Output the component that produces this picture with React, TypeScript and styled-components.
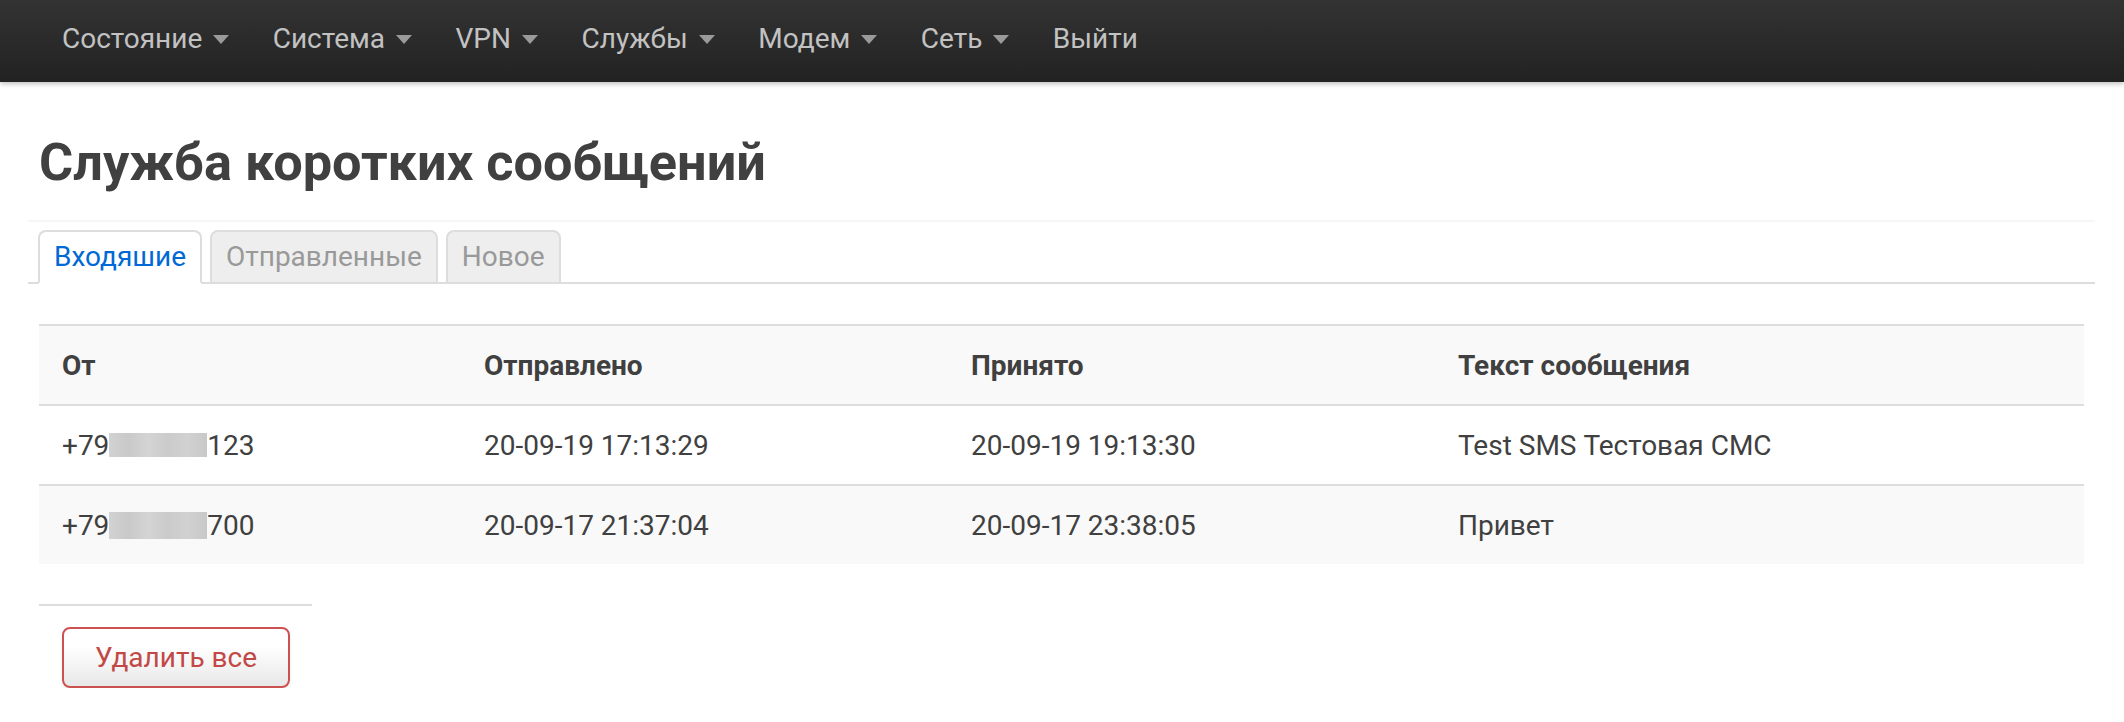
import React from "react";
import styled, { createGlobalStyle } from "styled-components";

const GlobalStyle = createGlobalStyle`
  html, body {
    margin: 0;
    padding: 0;
    background: #ffffff;
  }
  body {
    font-family: Roboto, "Noto Sans", "Liberation Sans", sans-serif;
    font-size: 28px;
    color: #404040;
  }
  * { box-sizing: border-box; }
`;

const Navbar = styled.header`
  height: 82px;
  background: linear-gradient(to bottom, #333333, #222222);
  box-shadow: 0 2px 5px rgba(0, 0, 0, 0.25);
  display: flex;
  align-items: flex-start;
  padding-left: 41px;
`;

const NavItem = styled.a`
  display: flex;
  align-items: center;
  height: 76px;
  padding: 0 22.5px 0 21px;
  color: #c2c2c2;
  font-size: 28px;
  text-decoration: none;
  white-space: nowrap;
`;

const Caret = styled.span`
  display: inline-block;
  width: 0;
  height: 0;
  margin-left: 11px;
  margin-top: 3px;
  border-left: 8.5px solid transparent;
  border-right: 8.5px solid transparent;
  border-top: 9px solid #9a9a9a;
`;

const Main = styled.main`
  padding: 0 40px 0 39px;
`;

const Title = styled.h2`
  margin: 44px 0 22px;
  font-size: 52.3px;
  line-height: 72px;
  font-weight: 700;
  color: #404040;
`;

const Section = styled.section`
  border-top: 2px solid #f6f6f6;
  margin: 0 -11px;
  padding-top: 8px;
`;

const TabBar = styled.ul`
  list-style: none;
  margin: 0;
  padding: 0 0 0 10px;
  display: flex;
  gap: 8px;
  border-bottom: 2px solid #dddddd;
`;

const Tab = styled.li<{ $active?: boolean }>`
  margin-bottom: -2px;
  padding: 0 14px;
  line-height: 50px;
  font-size: 28px;
  border: 2px solid #dddddd;
  border-bottom-color: ${(p) => (p.$active ? "transparent" : "#dddddd")};
  border-radius: 8px 8px 0 0;
  background: ${(p) => (p.$active ? "#ffffff" : "#eeeeee")};
  color: ${(p) => (p.$active ? "#0069d6" : "#999999")};
  white-space: nowrap;
`;

const Table = styled.div`
  margin-top: 40px;
`;

const Row = styled.div<{ $bg: string }>`
  display: grid;
  grid-template-columns: 422px 487px 487px 1fr;
  height: 80px;
  border-top: 2px solid #dddddd;
  background: ${(p) => p.$bg};
`;

const Cell = styled.div<{ $head?: boolean }>`
  display: flex;
  align-items: center;
  padding: 0 23px;
  font-size: 28px;
  font-weight: ${(p) => (p.$head ? 700 : 400)};
  color: #404040;
  white-space: nowrap;
`;

const Blur = styled.span<{ $h: number }>`
  display: inline-block;
  width: 98px;
  height: ${(p) => p.$h}px;
  background: linear-gradient(
    to right,
    #d2d2d2 0%,
    #c9c9c9 20%,
    #d4d4d4 40%,
    #cbcbcb 60%,
    #d1d1d1 80%,
    #c8c8c8 100%
  );
  filter: blur(0.6px);
`;

const Divider = styled.div`
  width: 273px;
  height: 2px;
  background: #dddddd;
  margin-top: 40px;
`;

const Actions = styled.div`
  padding: 21px 0 0 23px;
`;

const DangerButton = styled.button`
  height: 61px;
  padding: 0 31px;
  font-family: Roboto, "Noto Sans", "Liberation Sans", sans-serif;
  font-size: 28px;
  color: #c24846;
  background: linear-gradient(to bottom, #ffffff 30%, #e8e8e8 100%);
  border: 2px solid #cc5252;
  border-radius: 8px;
  box-shadow: 0 2px 4px rgba(0, 0, 0, 0.06);
  cursor: pointer;
`;

const navItems: { label: string; caret: boolean }[] = [
  { label: "Состояние", caret: true },
  { label: "Система", caret: true },
  { label: "VPN", caret: true },
  { label: "Службы", caret: true },
  { label: "Модем", caret: true },
  { label: "Сеть", caret: true },
  { label: "Выйти", caret: false },
];

const messages = [
  { pre: "+79", post: "123", h: 24, sent: "20-09-19 17:13:29", recv: "20-09-19 19:13:30", text: "Test SMS Тестовая СМС" },
  { pre: "+79", post: "700", h: 27, sent: "20-09-17 21:37:04", recv: "20-09-17 23:38:05", text: "Привет" },
];

export default function App() {
  return (
    <>
      <GlobalStyle />
      <Navbar>
        {navItems.map((n) => (
          <NavItem key={n.label} href="#">
            {n.label}
            {n.caret && <Caret />}
          </NavItem>
        ))}
      </Navbar>
      <Main>
        <Title>Служба коротких сообщений</Title>
        <Section>
          <TabBar>
            <Tab $active>Входяшие</Tab>
            <Tab>Отправленные</Tab>
            <Tab>Новое</Tab>
          </TabBar>
        </Section>
        <Table>
          <Row $bg="#f9f9f9">
            <Cell $head>От</Cell>
            <Cell $head>Отправлено</Cell>
            <Cell $head>Принято</Cell>
            <Cell $head>Текст сообщения</Cell>
          </Row>
          {messages.map((m, i) => (
            <Row key={i} $bg={i % 2 === 0 ? "#ffffff" : "#f9f9f9"}>
              <Cell>
                {m.pre}
                <Blur $h={m.h} />
                {m.post}
              </Cell>
              <Cell>{m.sent}</Cell>
              <Cell>{m.recv}</Cell>
              <Cell>{m.text}</Cell>
            </Row>
          ))}
        </Table>
        <Divider />
        <Actions>
          <DangerButton>Удалить все</DangerButton>
        </Actions>
      </Main>
    </>
  );
}
